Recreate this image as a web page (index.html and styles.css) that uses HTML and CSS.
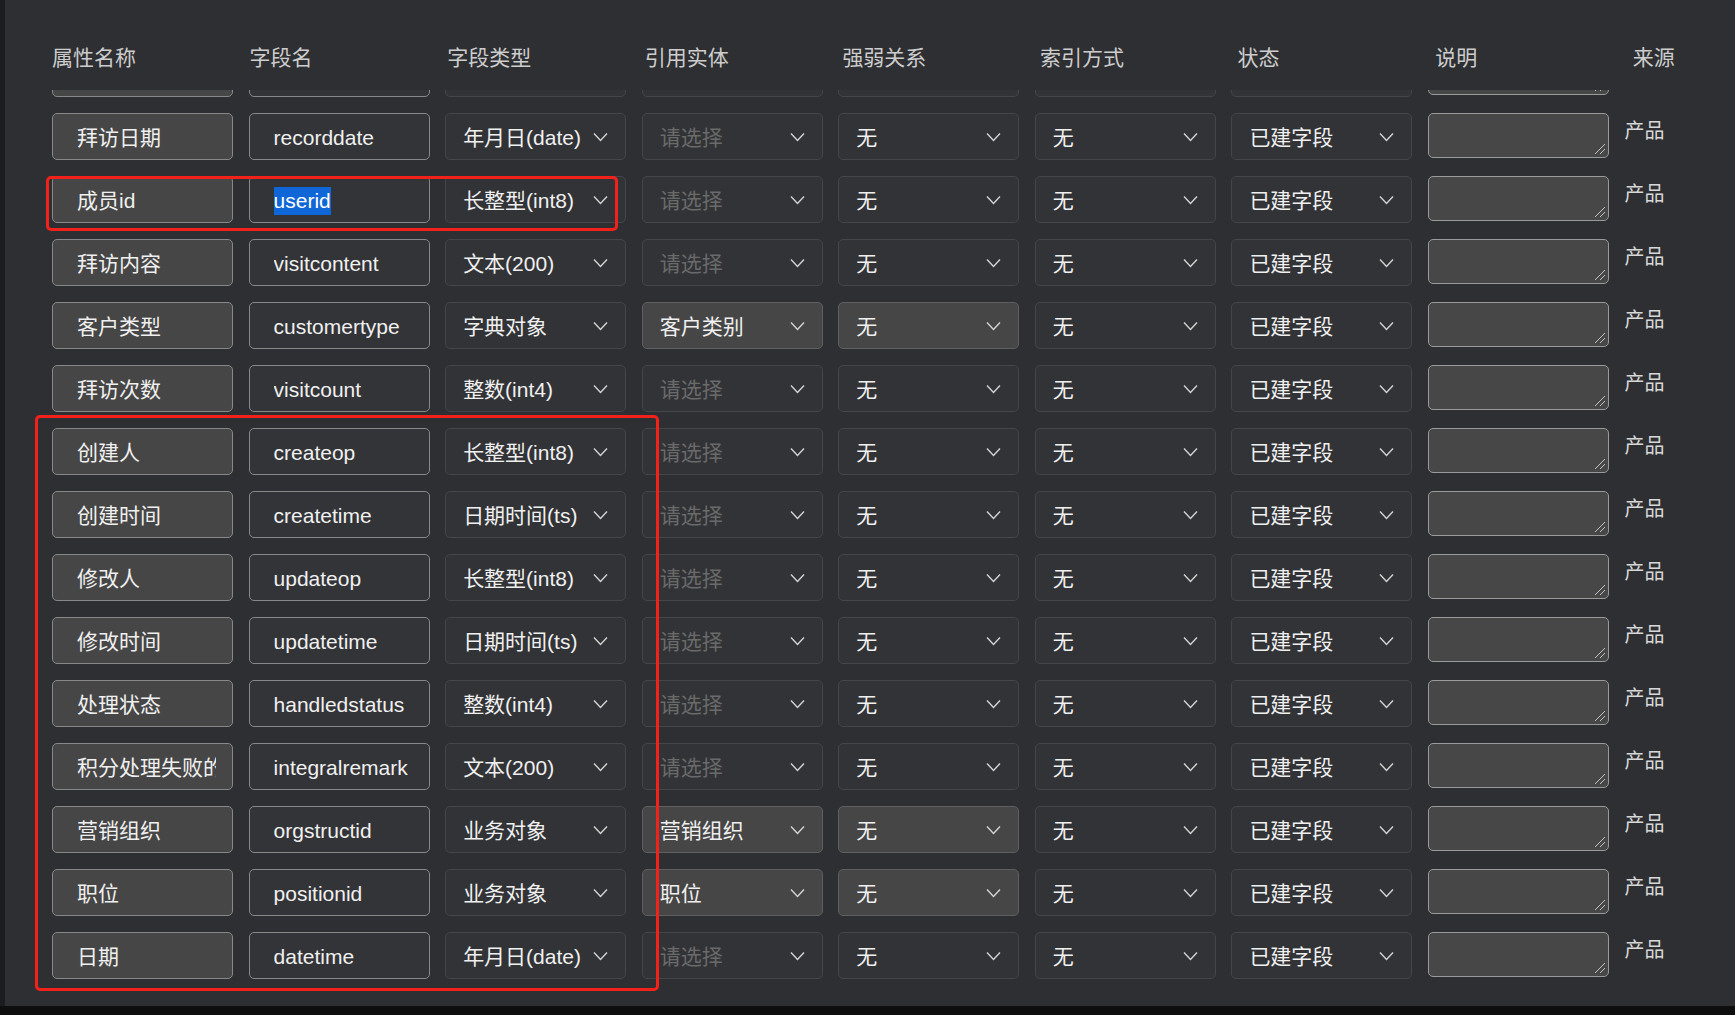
FILE: index.html
```html
<!DOCTYPE html>
<html lang="zh-CN">
<head>
<meta charset="utf-8">
<title>字段列表</title>
<link rel="stylesheet" href="styles.css">
</head>
<body>
<div class="app">
  <div class="panel">
    <div class="head">
      <div>属性名称</div><div>字段名</div><div>字段类型</div><div>引用实体</div><div>强弱关系</div><div>索引方式</div><div>状态</div><div>说明</div><div>来源</div>
    </div>
    <div class="scroller">
      <div class="rows" id="rows"></div>
    </div>
  </div>
  <div class="mark mark-a"></div>
  <div class="mark mark-b"></div>
</div>
<script src="app.js"></script>
</body>
</html>
```

FILE: app.js
```js
const data = [
  ["", "", "", "", "无", false],
  ["拜访日期", "recorddate", "年月日(date)", "", "无", false],
  ["成员id", "userid", "长整型(int8)", "", "无", false],
  ["拜访内容", "visitcontent", "文本(200)", "", "无", false],
  ["客户类型", "customertype", "字典对象", "客户类别", "无", true],
  ["拜访次数", "visitcount", "整数(int4)", "", "无", false],
  ["创建人", "createop", "长整型(int8)", "", "无", false],
  ["创建时间", "createtime", "日期时间(ts)", "", "无", false],
  ["修改人", "updateop", "长整型(int8)", "", "无", false],
  ["修改时间", "updatetime", "日期时间(ts)", "", "无", false],
  ["处理状态", "handledstatus", "整数(int4)", "", "无", false],
  ["积分处理失败的原因", "integralremark", "文本(200)", "", "无", false],
  ["营销组织", "orgstructid", "业务对象", "营销组织", "无", true],
  ["职位", "positionid", "业务对象", "职位", "无", true],
  ["日期", "datetime", "年月日(date)", "", "无", false]
];

const chev = '<svg class="chev" width="15" height="10" viewBox="0 0 15 10"><polyline points="1,1.5 7.5,8.5 14,1.5" fill="none" stroke="#d4d4d4" stroke-width="1.4"/></svg>';
const grip = '<svg class="grip" width="12" height="12" viewBox="0 0 12 12"><line x1="1" y1="11" x2="11" y2="1" stroke="#c4c4c4" stroke-width="1"/><line x1="6" y1="11" x2="11" y2="6" stroke="#c4c4c4" stroke-width="1"/></svg>';

function sel(text, cls, placeholder) {
  const t = text
    ? '<span class="val">' + text + '</span>'
    : '<span class="val ph">' + (placeholder ? '请选择' : '') + '</span>';
  return '<div class="sel ' + cls + '">' + t + chev + '</div>';
}

const rows = document.getElementById('rows');
data.forEach((r, i) => {
  const first = i === 0;
  const name = r[1] === 'userid' ? '<span class="hl">userid</span>' : r[1];
  let html = '';
  html += '<div class="inp inp-name"><span class="txt">' + r[0] + '</span></div>';
  html += '<div class="inp inp-field"><span class="txt">' + name + '</span></div>';
  html += sel(r[2], '', false);
  html += sel(r[3], r[5] ? 'filled' : '', !first);
  html += sel(first ? '' : r[4], r[5] ? 'filled' : '', false);
  html += sel(first ? '' : '无', '', false);
  html += sel(first ? '' : '已建字段', '', false);
  html += '<div class="area">' + grip + '</div>';
  html += '<div class="src">' + (first ? '' : '产品') + '</div>';
  const row = document.createElement('div');
  row.className = 'row';
  row.innerHTML = html;
  rows.appendChild(row);
});
```

FILE: styles.css
```css
html, body {
  margin: 0;
  padding: 0;
}
body {
  background: #0e0e0e;
  font-family: "Liberation Sans", "Noto Sans CJK SC", sans-serif;
  font-size: 21px;
  color: #f0f0f0;
}
.app {
  position: relative;
  width: 1735px;
  height: 1015px;
  overflow: hidden;
}
.panel {
  height: 1006px;
  background: #2e2f32;
  border-left: 5px solid #1c1c1e;
  box-sizing: border-box;
  padding-left: 47px;
}
.head {
  height: 90px;
  box-sizing: border-box;
  padding-top: 26px;
  display: grid;
  grid-template-columns: repeat(9, 197.6px);
  align-items: center;
  color: #cdcdcd;
  line-height: 30px;
}
.scroller {
  height: 916px;
  overflow: hidden;
}
.rows {
  margin-top: -40px;
  display: flex;
  flex-direction: column;
  gap: 16px;
}
.row {
  display: grid;
  grid-template-columns: repeat(8, 181px) auto;
  column-gap: 15.57px;
  height: 47px;
  align-items: start;
}
.inp, .sel {
  height: 47px;
  box-sizing: border-box;
  border-radius: 5px;
  display: flex;
  align-items: center;
  line-height: 28px;
  white-space: nowrap;
}
.inp {
  border: 1px solid #888888;
  padding: 2px 16px 0 24px;
}
.inp .txt {
  display: block;
  overflow: hidden;
  white-space: nowrap;
  width: 100%;
}
.inp-name {
  background: #464646;
}
.inp-field {
  background: #333437;
}
.hl {
  background: #0f66d6;
  color: #ffffff;
  display: inline-block;
  line-height: 28px;
}
.sel {
  background: #323336;
  border: 1px solid #45464a;
  padding: 2px 17px 0;
  justify-content: space-between;
}
.sel .chev {
  margin-top: -2px;
}
.sel.filled {
  background: #464646;
  border-color: #5f5f61;
}
.sel .val {
  overflow: hidden;
}
.sel .ph {
  color: #6a6a6a;
}
.chev {
  flex: none;
  display: block;
}
.area {
  position: relative;
  height: 45px;
  box-sizing: border-box;
  background: #474747;
  border: 1px solid #9a9a9a;
  border-radius: 5px;
}
.grip {
  position: absolute;
  right: 2px;
  bottom: 2px;
}
.src {
  padding-top: 4px;
  line-height: 28px;
  color: #d8d8d8;
  font-size: 20px;
}
.mark {
  position: absolute;
  border: 3px solid #f2221b;
  border-radius: 5px;
  box-sizing: border-box;
  pointer-events: none;
}
.mark-a {
  left: 46px;
  top: 176px;
  width: 572px;
  height: 55px;
}
.mark-b {
  left: 35px;
  top: 415px;
  width: 624px;
  height: 576px;
}
```
